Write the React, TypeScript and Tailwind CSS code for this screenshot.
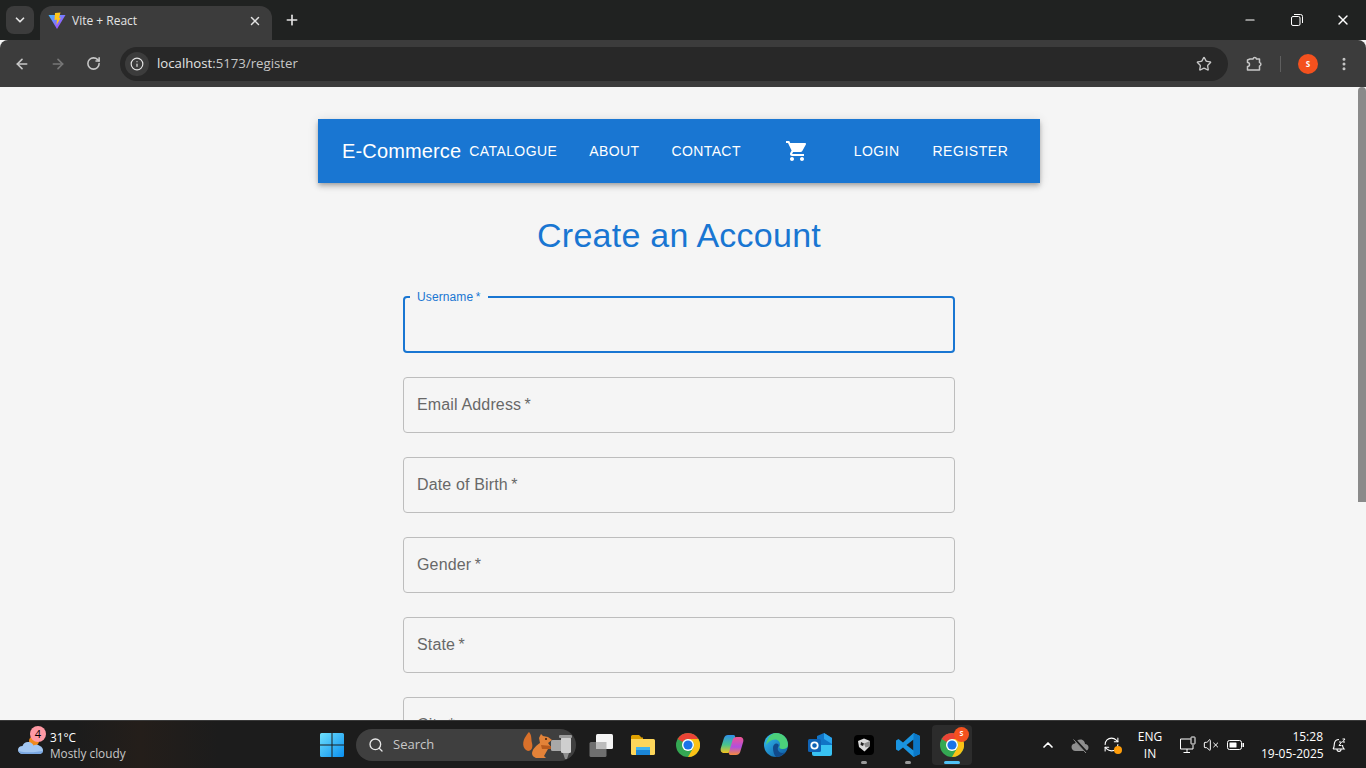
import { ArrowLeft, ArrowRight, ChevronDown, ChevronUp, Info, Minus, MoreVertical, Plus, RefreshCw, RotateCw, Search, Star, VolumeX, X } from "lucide-react";

const fields = ["Email Address", "Date of Birth", "Gender", "State", "City"];

const ViteLogo = () => (
  <svg width="18" height="18" viewBox="0 0 18 18">
    <defs>
      <linearGradient id="vite" x1="0" y1="0" x2="1" y2="1">
        <stop offset="0" stopColor="#41b6ff" />
        <stop offset="1" stopColor="#bd34fe" />
      </linearGradient>
    </defs>
    <path d="M0.5 3 L9 17 L17.5 3 Z" fill="url(#vite)" />
    <path d="M7 1 L12.5 0.5 L11 6 L13 5.5 L8.5 13 L9 7.5 L6.5 8 Z" fill="#ffc517" />
  </svg>
);

const ChromeIcon = ({ size = 24 }: { size?: number }) => (
  <svg width={size} height={size} viewBox="0 0 24 24">
    <circle cx="12" cy="12" r="12" fill="#34a853" />
    <path d="M12 0 A12 12 0 0 1 22.4 6 L12 6 A6 6 0 0 0 6.8 9 L1.6 6 A12 12 0 0 1 12 0 Z" fill="#ea4335" />
    <path d="M22.4 6 A12 12 0 0 1 12 24 L17.2 15 A6 6 0 0 0 17.2 9 L12 6 Z" fill="#fbc116" />
    <circle cx="12" cy="12" r="6" fill="#fff" />
    <circle cx="12" cy="12" r="4.6" fill="#1a73e8" />
  </svg>
);

const WindowsLogo = () => (
  <svg width="24" height="24" viewBox="0 0 24 24">
    <defs>
      <linearGradient id="win" x1="0" y1="0" x2="1" y2="1">
        <stop offset="0" stopColor="#6fe0fb" />
        <stop offset="1" stopColor="#0a8ff0" />
      </linearGradient>
    </defs>
    <path d="M0 1.5 A1.5 1.5 0 0 1 1.5 0 H11.5 V11.5 H0 Z M12.5 0 H22.5 A1.5 1.5 0 0 1 24 1.5 V11.5 H12.5 Z M0 12.5 H11.5 V24 H1.5 A1.5 1.5 0 0 1 0 22.5 Z M12.5 12.5 H24 V22.5 A1.5 1.5 0 0 1 22.5 24 H12.5 Z" fill="url(#win)" />
  </svg>
);

const FolderIcon = () => (
  <svg width="24" height="24" viewBox="0 0 24 24">
    <path d="M0 3.5 A1.5 1.5 0 0 1 1.5 2 H8 L10.5 4.5 H12 V8 H0 Z" fill="#e0a100" />
    <path d="M0 6 H22.5 A1.5 1.5 0 0 1 24 7.5 V21 A1.5 1.5 0 0 1 22.5 22 H1.5 A1.5 1.5 0 0 1 0 21 Z" fill="#fdd65a" />
    <path d="M5 14 H19 V22 H5 Z" fill="#1a86d8" />
    <path d="M5 14 H19 V17 H5 Z" fill="#41b4ee" />
  </svg>
);

const CopilotIcon = () => (
  <svg width="24" height="24" viewBox="0 0 24 24">
    <defs>
      <linearGradient id="cop1" x1="0" y1="0" x2="0" y2="1">
        <stop offset="0" stopColor="#2f8fe8" />
        <stop offset="0.55" stopColor="#49c48c" />
        <stop offset="1" stopColor="#f6c21c" />
      </linearGradient>
      <linearGradient id="cop2" x1="0" y1="0" x2="0" y2="1">
        <stop offset="0" stopColor="#f0568f" />
        <stop offset="0.55" stopColor="#b04fe0" />
        <stop offset="1" stopColor="#f58a3c" />
      </linearGradient>
    </defs>
    <path d="M8 2 H13.5 C15 2 15.5 3.5 15 5 L11.5 17 C11 19 9.5 20 7.5 20 H4 C1 20 0 17.5 1 14.5 L4 5 C4.8 3 6 2 8 2 Z" fill="url(#cop1)" />
    <path d="M10.5 22 H16 C18 22 19.5 21 20.2 19 L23 9.5 C24 6.5 23 4 20 4 H16.5 C14.5 4 13.2 5 12.6 7 L9 19 C8.5 20.5 9 22 10.5 22 Z" fill="url(#cop2)" />
  </svg>
);

const EdgeIcon = () => (
  <svg width="24" height="24" viewBox="0 0 24 24">
    <defs>
      <linearGradient id="edge" x1="0" y1="0" x2="1" y2="1">
        <stop offset="0" stopColor="#35c1f1" />
        <stop offset="1" stopColor="#0c59a4" />
      </linearGradient>
    </defs>
    <circle cx="12" cy="12" r="12" fill="url(#edge)" />
    <path d="M12 0 C19 0 24 5 24 12 C24 15 21 16.5 18 16 C15 15.5 15 14 16 12.5 C16.5 9 14 6.5 11 6.5 C7 6.5 4 9 2 12 C3 5 7 0 12 0 Z" fill="#4bd07a" />
    <path d="M9 15 C9 11 12 9.5 14 11 C16 13 13 14 14 17 C15 20 19 21 21 19 C19 22 15 24 12 24 C10 22 9 18 9 15 Z" fill="#114a8b" />
  </svg>
);

const OutlookIcon = () => (
  <svg width="24" height="24" viewBox="0 0 24 24">
    <path d="M9 3 L16 0 L24 5 V13 H9 Z" fill="#1174c6" />
    <path d="M16 0 L24 5 V11 L16 6 Z" fill="#2aa4ec" />
    <path d="M4 12 H24 V21 A2 2 0 0 1 22 23 H6 A2 2 0 0 1 4 21 Z" fill="#38c2f2" />
    <rect x="0" y="6" width="13" height="13" rx="1.5" fill="#0f62b4" />
    <circle cx="6.5" cy="12.5" r="3.2" fill="none" stroke="#fff" strokeWidth="1.8" />
  </svg>
);

const BlackAppIcon = () => (
  <svg width="20" height="20" viewBox="0 0 20 20">
    <rect width="20" height="20" rx="4" fill="#000" />
    <path d="M10 3.5 L16 6 L15.5 11.5 L10.5 16.5 L5 12 L4 6 Z" fill="#d9d9d9" />
    <path d="M10 8.5 L16 6 L15.5 11.5 L11.5 12.5 Z" fill="#8a8a8a" />
    <path d="M7 7 L10 8.5 L9 11 L6.5 10 Z" fill="#222" />
  </svg>
);

const VsCodeIcon = () => (
  <svg width="24" height="24" viewBox="0 0 24 24">
    <path d="M17.5 0 L24 3 V21 L17.5 24 L7 14.5 L2.5 18 L0 16.5 V7.5 L2.5 6 L7 9.5 Z M17.5 6.5 L10.5 12 L17.5 17.5 Z" fill="#1a94e0" />
    <path d="M17.5 0 L24 3 V21 L17.5 24 Z" fill="#0b78c8" />
  </svg>
);

const TaskView = () => (
  <svg width="24" height="24" viewBox="0 0 24 24">
    <rect x="0.5" y="9" width="17" height="15" rx="1.5" fill="#6f6f6f" />
    <rect x="7" y="1" width="17" height="15" rx="1.5" fill="#f4f4f4" />
    <rect x="7" y="9" width="10.5" height="7" fill="#bcbcbc" />
  </svg>
);

// squirrel with the camera that sits at the end of the search box
const SearchDoodle = () => (
  <svg width="54" height="32" viewBox="0 0 54 32">
    <path d="M6 22 C0 20 0 12 4 7 C5 5 6 4 7 3 C10 6 9 10 10 14 C11 18 10 22 6 22 Z" fill="#d9702a" />
    <path d="M10 24 C11 19 15 16 18 14 L17 9 L19 5 L21 7 L26 8 L30 11 L26 14 L29 18 L26 20 L22 27 L24 29 L14 29 C11 28 10 26 10 24 Z" fill="#e38238" />
    <path d="M19 16 L29 17 L29 20 L20 20 Z" fill="#b85a1c" />
    <circle cx="24" cy="10" r="1" fill="#3a1c08" />
    <rect x="29" y="11" width="12" height="11" rx="1.5" fill="#a8a8a8" />
    <rect x="39" y="8" width="10" height="16" rx="1.5" fill="#cfcfcf" />
    <rect x="37" y="6" width="13" height="3" rx="1" fill="#9b9b9b" />
    <path d="M41 24 H47 L45 30 H43 Z" fill="#8f8f8f" />
  </svg>
);

const WeatherIcon = () => (
  <svg width="26" height="20" viewBox="0 0 26 20">
    <circle cx="16" cy="6" r="5" fill="#f08a1d" />
    <path d="M5 19 C2 19 0 17 0 15 C0 12.5 2 11 4.5 11 C5.5 8 8 6.5 11 7 C13.5 7.5 15 9 15.5 10.5 C17 9.5 20 9.5 22 11 C24 12 25 13.5 25 15.5 C25 17.5 23.5 19 21 19 Z" fill="#a3c7f2" />
    <path d="M0.5 16 C1 18 3 19 5 19 H21 C23.5 19 25 17.5 25 15.5 C20 17.5 6 18 0.5 16 Z" fill="#7aa8e2" />
  </svg>
);

const TextField = ({ label }: { label: string }) => (
  <div className="flex h-14 items-center rounded border border-[#bdbdbd] px-[13px] font-['Liberation_Sans',sans-serif] text-base tracking-[0.15px] text-[#686868]">
    {label}{"\u2009"}*
  </div>
);

const TaskbarButton = ({ children }: { children: React.ReactNode }) => (
  <div className="flex h-10 w-11 items-center justify-center">{children}</div>
);

const App = () => {
  return (
    <div className="flex h-screen w-full flex-col overflow-hidden bg-[#f5f5f5] font-['Open_Sans',sans-serif]">
      {/* tab strip */}
      <div className="flex h-10 shrink-0 items-end bg-[#202221] pl-1.5 text-white">
        <div className="mb-1.5 flex h-7 w-7 items-center justify-center rounded-lg bg-[#3c3c3c]">
          <ChevronDown size={14} strokeWidth={3} className="text-[#e3e3e3]" />
        </div>
        <div className="ml-1.5 flex h-[34px] w-[232px] items-center rounded-t-xl bg-[#3c3c3c] pb-1 pl-2 pr-2.5">
          <ViteLogo />
          <span className="ml-[6px] flex-1 text-xs text-[#e3e3e3]">Vite + React</span>
          <X size={14} strokeWidth={2.5} className="text-[#e3e3e3]" />
        </div>
        <Plus size={16} strokeWidth={2.5} className="mb-3 ml-3 text-[#e3e3e3]" />
        <div className="mb-3 ml-auto flex items-center pr-[15px]">
          <Minus size={14} />
          <svg width="12" height="12" viewBox="0 0 12 12" fill="none" stroke="#fff" strokeWidth="1" className="ml-[34px]">
            <rect x="0.5" y="2.5" width="8.5" height="9" rx="1.5" />
            <path d="M3 0.5 H9.5 A2 2 0 0 1 11.5 2.5 V9" />
          </svg>
          <X size={16} className="ml-[32px]" />
        </div>
      </div>

      {/* toolbar */}
      <div className="flex h-[47px] shrink-0 items-center rounded-t-lg bg-[#3c3c3c] pl-3.5 text-[#c7c7c7]">
        <ArrowLeft size={16} strokeWidth={2.5} />
        <ArrowRight size={16} strokeWidth={2.5} className="ml-[20px] text-[#777777]" />
        <RotateCw size={15} strokeWidth={2.5} className="ml-[20px]" />
        <div className="ml-[19px] flex h-[34px] w-[1108px] items-center rounded-full bg-[#282828] pl-[5px] pr-4">
          <div className="flex h-6 w-6 items-center justify-center rounded-full bg-[#3c3c3c]">
            <Info size={14} strokeWidth={2} className="text-[#e3e3e3]" />
          </div>
          <span className="ml-2 flex-1 text-[13.2px] text-[#c7c7c7]">
            <span className="text-[#e3e3e3]">localhost</span>:5173/register
          </span>
          <Star size={16} strokeWidth={2} />
        </div>
        <svg width="18" height="18" viewBox="0 0 18 18" fill="none" stroke="currentColor" strokeWidth="1.5" strokeLinejoin="round" className="ml-[17px]">
          <path d="M5 4 H8 A1.8 1.8 0 0 1 11.5 4 H14.5 V7.5 A1.8 1.8 0 0 1 14.5 11 V15 H2.5 V11.5 A2 2 0 0 0 2.5 7.5 V5 Z" />
        </svg>
        <div className="ml-[17px] h-[16px] w-px bg-[#5f5f5f]" />
        <div className="ml-[17px] flex h-5 w-5 items-center justify-center rounded-full bg-[#f4511e] text-[8px] font-bold text-white">
          S
        </div>
        <MoreVertical size={16} strokeWidth={2.5} className="ml-[18px]" />
      </div>

      {/* page */}
      <div className="flex min-h-0 flex-1">
        <main className="min-w-0 flex-1 overflow-hidden">
          <header className="mx-auto mt-8 flex h-16 w-[722px] items-center bg-[#1976d2] pl-6 font-['Liberation_Sans',sans-serif] text-white shadow-[0_2px_4px_-1px_rgba(0,0,0,0.2),0_4px_5px_0_rgba(0,0,0,0.14),0_1px_10px_0_rgba(0,0,0,0.12)]">
            <span className="text-xl tracking-[0.15px]">E-Commerce</span>
            <nav className="ml-2 flex items-center text-sm tracking-[0.4px]">
              <span>CATALOGUE</span>
              <span className="ml-8">ABOUT</span>
              <span className="ml-8">CONTACT</span>
              <svg width="24" height="24" viewBox="0 0 24 24" fill="#fff" className="ml-[44px]">
                <path d="M7 18c-1.1 0-1.99.9-1.99 2S5.9 22 7 22s2-.9 2-2-.9-2-2-2zM1 2v2h2l3.6 7.59-1.35 2.45c-.16.28-.25.61-.25.96 0 1.1.9 2 2 2h12v-2H7.42c-.14 0-.25-.11-.25-.25l.03-.12.9-1.63h7.45c.75 0 1.41-.41 1.75-1.03l3.58-6.49c.08-.14.12-.31.12-.48 0-.55-.45-1-1-1H5.21l-.94-2H1zm16 16c-1.1 0-1.99.9-1.99 2s.89 2 1.99 2 2-.9 2-2-.9-2-2-2z" />
              </svg>
              <span className="ml-[45px]">LOGIN</span>
              <span className="ml-[33px] tracking-[0.55px]">REGISTER</span>
            </nav>
          </header>

          <h1 className="mt-[32px] text-center font-['Liberation_Sans',sans-serif] text-[34px] leading-[40px] tracking-[0.25px] text-[#1976d2]">
            Create an Account
          </h1>

          <form className="mx-auto mt-[42px] flex w-[552px] flex-col gap-6">
            <div className="relative -mt-px h-[57px] rounded border-2 border-[#1976d2]">
              <span className="absolute left-[5px] top-[-8px] bg-[#f5f5f5] px-[7px] font-['Liberation_Sans',sans-serif] text-xs leading-[14px] tracking-[0.11px] text-[#1976d2]">
                Username{"\u2009"}*
              </span>
            </div>
            {fields.map((f) => (
              <TextField key={f} label={f} />
            ))}
          </form>
        </main>
        <div className="w-2 shrink-0 bg-[#f5f5f5]">
          <div className="h-[415px] rounded-t-sm bg-[#8a8a8a]" />
        </div>
      </div>

      {/* taskbar */}
      <div className="flex h-12 shrink-0 items-center border-t border-[#3a3a3a] bg-[#1c1c1c] text-white">
        <div className="relative flex h-full w-[312px] items-center bg-[linear-gradient(90deg,#1c1c1c_0%,#1c1c1c_25%,#241e1a_45%,#1c1c1c_70%)] pl-[18px]">
          <WeatherIcon />
          <span className="absolute left-[30px] top-[5px] flex h-4 w-4 items-center justify-center rounded-full bg-[#ff99a4] text-[11px] text-black">
            4
          </span>
          <div className="ml-[6px] text-[11.8px] leading-[16px]">
            <div>31°C</div>
            <div className="text-[#c8c8c8]">Mostly cloudy</div>
          </div>
        </div>
        <div className="flex h-10 w-10 items-center justify-center">
          <WindowsLogo />
        </div>
        <div className="ml-[4px] flex h-8 w-[220px] items-center rounded-full bg-[#3f3f3f] pl-3">
          <Search size={16} strokeWidth={2} className="text-[#e8e8e8]" />
          <span className="ml-[9px] flex-1 text-[13px] text-[#c8c8c8]">Search</span>
          <SearchDoodle />
        </div>
        <div className="ml-[3px] flex items-center">
          <TaskbarButton><TaskView /></TaskbarButton>
          <div className="-ml-0.5"><TaskbarButton><FolderIcon /></TaskbarButton></div>
          <div className="flex h-10 w-[45px] items-center justify-center"><ChromeIcon /></div>
          <TaskbarButton><CopilotIcon /></TaskbarButton>
          <TaskbarButton><EdgeIcon /></TaskbarButton>
          <TaskbarButton><OutlookIcon /></TaskbarButton>
          <div className="relative">
            <TaskbarButton><BlackAppIcon /></TaskbarButton>
            <span className="absolute bottom-px left-[19px] h-[3px] w-[6px] rounded-full bg-[#9a9a9a]" />
          </div>
          <div className="relative">
            <TaskbarButton><VsCodeIcon /></TaskbarButton>
            <span className="absolute bottom-px left-[19px] h-[3px] w-[6px] rounded-full bg-[#9a9a9a]" />
          </div>
          <div className="relative ml-[2px] flex h-10 w-10 items-center justify-center rounded bg-[#2c2c2c]">
            <ChromeIcon />
            <span className="absolute right-[3px] top-[2px] flex h-[15px] w-[15px] items-center justify-center rounded-full bg-[#f4511e] text-[7px] font-bold">
              S
            </span>
            <span className="absolute bottom-px left-[12px] h-[3px] w-4 rounded-full bg-[#4fc1f5]" />
          </div>
        </div>

        <div className="ml-[68px] flex items-center">
          <ChevronUp size={16} strokeWidth={2.5} />
          <svg width="18" height="18" viewBox="0 0 18 18" className="ml-[15px]">
            <path d="M4.5 15 C2 15 0.5 13 0.5 11 C0.5 9 2 7.5 4 7.5 C5 5 7 3.5 9.5 3.5 C12.5 3.5 14 6 14 8 C16 8 17.5 9.5 17.5 11.5 C17.5 13.5 16 15 14 15 Z" fill="#8f8f8f" />
            <path d="M3 2.5 L15.5 16" stroke="#1c1c1c" strokeWidth="2.2" />
            <path d="M2.5 3.5 L15 17" stroke="#8f8f8f" strokeWidth="1" />
          </svg>
          <div className="relative ml-[14px] flex">
            <RefreshCw size={17} strokeWidth={1.5} />
            <span className="absolute bottom-[-1px] right-[-2px] h-2 w-2 rounded-full bg-[#ff9d0a]" />
          </div>
          <div className="ml-[17px] w-[26px] text-center text-xs leading-[17px]">
            <div>ENG</div>
            <div>IN</div>
          </div>
          <svg width="18" height="18" viewBox="0 0 18 18" fill="none" stroke="#fff" strokeWidth="1" className="ml-[16px]">
            <path d="M11.5 3 H1.5 V13 H14 V9" />
            <path d="M8 13 V16 M4.5 16.5 H11" />
            <rect x="12" y="1" width="4" height="7" rx="0.5" />
          </svg>
          <VolumeX size={16} strokeWidth={1.5} className="ml-[6px]" />
          <svg width="18" height="12" viewBox="0 0 18 12" fill="none" className="ml-[8px]">
            <rect x="0.5" y="1.5" width="14" height="9" rx="2" stroke="#fff" />
            <rect x="2.5" y="3.5" width="7" height="5" rx="0.5" fill="#fff" />
            <rect x="15.5" y="4" width="1.5" height="4" fill="#fff" />
          </svg>
          <div className="ml-[16px] w-[62px] text-right text-xs leading-[17px]">
            <div>15:28</div>
            <div className="whitespace-nowrap">19-05-2025</div>
          </div>
          <svg width="16" height="16" viewBox="0 0 16 16" fill="none" stroke="#fff" strokeWidth="1.1" className="ml-[8px]">
            <path d="M2 12 C3.5 10.5 3 8 3.5 6 C4 3.5 6 2.5 8 2.5 M2 12 H13 C12 11 11.5 9.5 11.5 8 M6 12.5 C6 15 10 15 10 12.5" />
            <path d="M8 5 H10.5 L8 8.5 H10.5 M11.5 2 H14 L11.5 5 H14" strokeWidth="1" />
          </svg>
        </div>
      </div>
    </div>
  );
};

export default App;
